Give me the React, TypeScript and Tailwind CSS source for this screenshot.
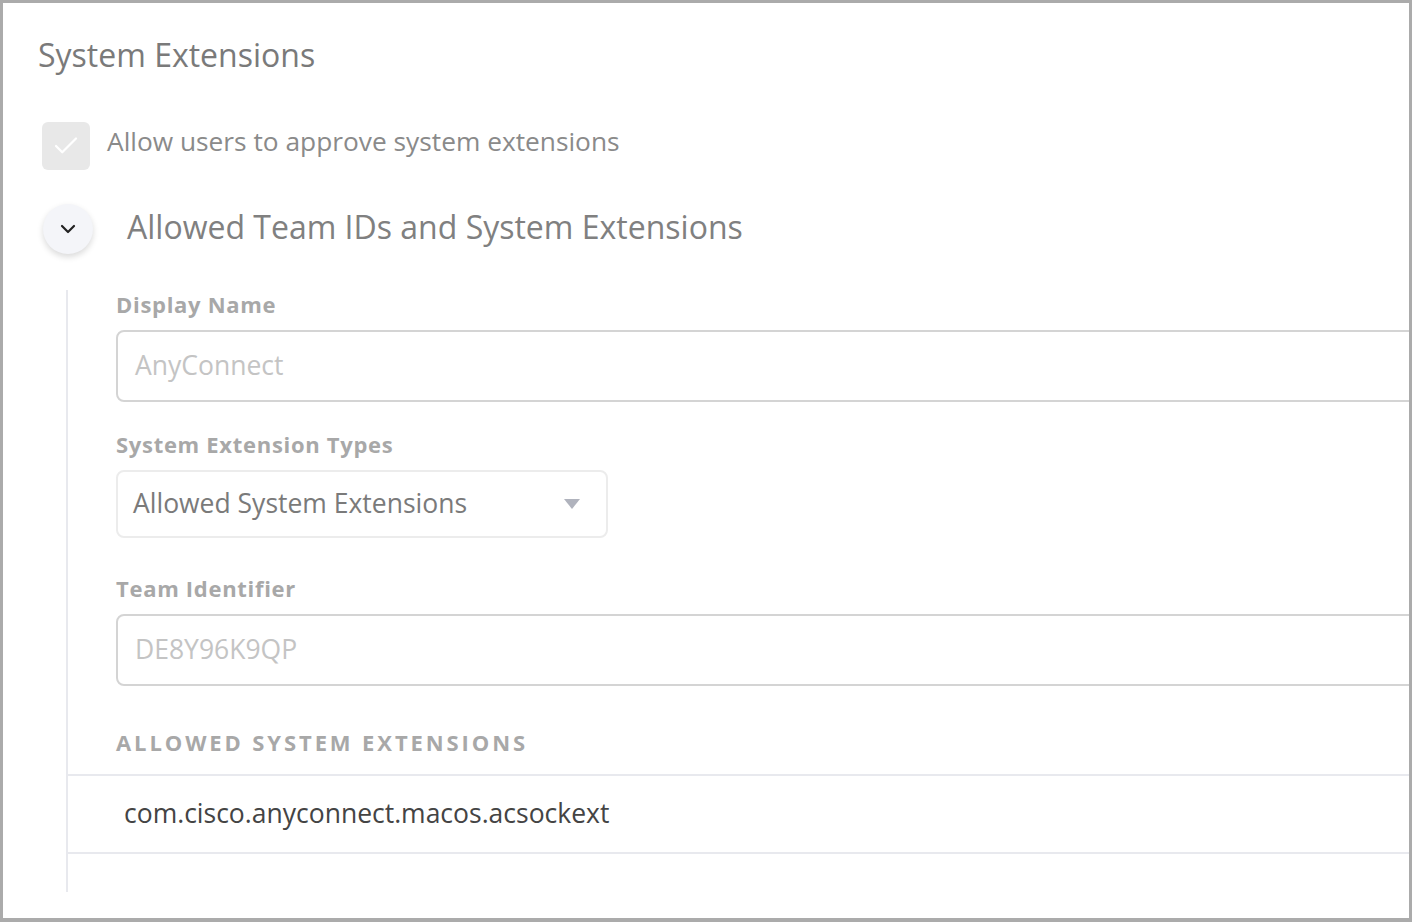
import { Check, ChevronDown } from 'lucide-react';

const font = { fontFamily: '"Open Sans", Lato, sans-serif' };

function Label({ children }: { children: string }) {
  return <div className="text-[22px] font-bold text-[#a8a8a8] tracking-[0.7px] leading-[28px]">{children}</div>;
}

function Field({ label, value }: { label: string; value: string }) {
  return (
    <div>
      <Label>{label}</Label>
      <div className="mt-[12px] w-[1400px] h-[72px] border-2 border-[#d4d4d4] rounded-[8px] flex items-center pl-[17px]">
        <span className="text-[26.5px] text-[#c4c4c4]">{value}</span>
      </div>
    </div>
  );
}

export default function App() {
  return (
    <div style={font} className="w-[1412px] h-[922px] bg-white border-[3px] border-b-4 border-[#ababab] overflow-hidden">
      <div className="pl-[35px] pt-[32px]">
        <h1 className="text-[32px] text-[#7a7a7a] leading-[40px]">System Extensions</h1>

        {/* checkbox */}
        <div className="mt-[47px] ml-[4px] flex items-center gap-[17px]">
          <div className="w-[48px] h-[48px] rounded-[6px] bg-[#e8e8e8] flex items-center justify-center">
            <Check size={30} strokeWidth={1.8} className="text-white" />
          </div>
          <span className="text-[26.3px] text-[#8a8a8a] -mt-[8px]">Allow users to approve system extensions</span>
        </div>

        {/* collapsible header */}
        <div className="mt-[34px] ml-[5px] flex items-center gap-[34px]">
          <div className="w-[50px] h-[50px] rounded-full bg-[#f4f5f9] shadow-[0_3px_6px_rgba(0,0,0,0.15)] flex items-center justify-center">
            <ChevronDown size={24} strokeWidth={2.2} className="text-[#222]" />
          </div>
          <span className="text-[32px] text-[#808080] -mt-[4px]">Allowed Team IDs and System Extensions</span>
        </div>

        {/* nested section */}
        <div className="mt-[36px] ml-[28px] border-l-2 border-[#e8e9ee] h-[602px]">
          <div className="pl-[48px] flex flex-col gap-[28px]">
            <Field label="Display Name" value="AnyConnect" />

            <div>
              <Label>System Extension Types</Label>
              <div className="mt-[12px] w-[492px] h-[68px] border-2 border-[#ececec] rounded-[8px] flex items-center justify-between pl-[15px] pr-[26px]">
                <span className="text-[26.5px] text-[#7a7a7a]">Allowed System Extensions</span>
                <svg width="16" height="10" viewBox="0 0 16 10">
                  <path d="M0 0 H16 L8 10 Z" fill="#b0b3bd" />
                </svg>
              </div>
            </div>

            <div className="mt-[8px]">
              <Field label="Team Identifier" value="DE8Y96K9QP" />
            </div>
          </div>

          <div className="mt-[42px] pl-[48px] text-[22px] font-bold uppercase tracking-[2.9px] text-[#a8a8a8] leading-[28px]">
            Allowed System Extensions
          </div>
          <div className="mt-[18px] border-t-2 border-b-2 border-[#e8e9ee] h-[80px] flex items-center pl-[56px]">
            <span className="text-[26.5px] text-[#444]">com.cisco.anyconnect.macos.acsockext</span>
          </div>
        </div>
      </div>
    </div>
  );
}
